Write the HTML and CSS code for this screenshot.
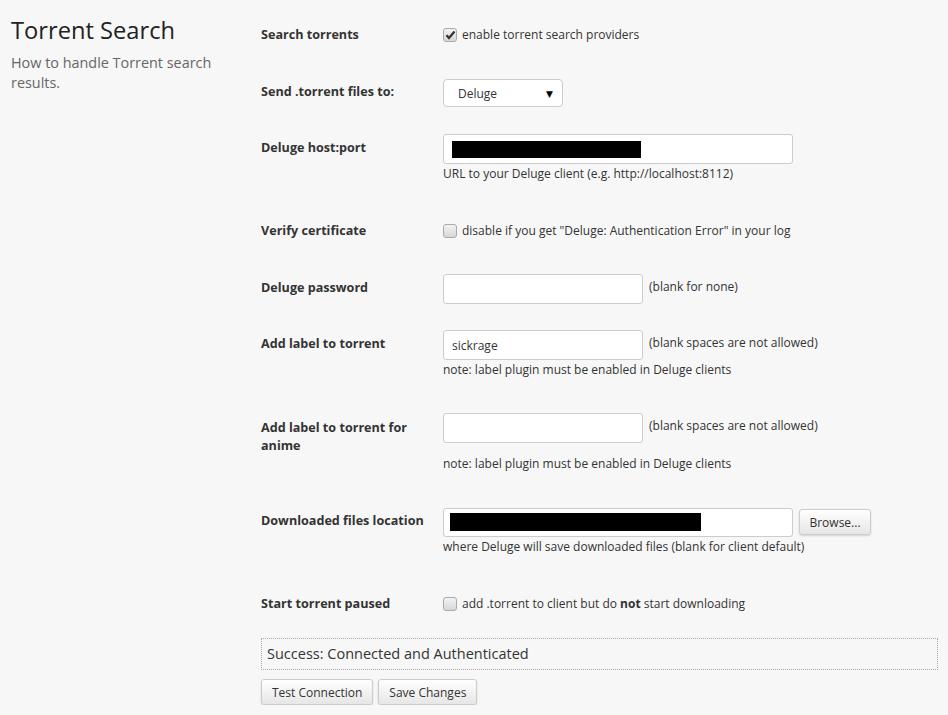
FILE: index.html
```html
<!DOCTYPE html>
<html>
<head>
<meta charset="utf-8">
<link rel="stylesheet" href="styles.css">
</head>
<body>
<div class="page">
  <div class="side">
    <h3 class="title">Torrent Search</h3>
    <p class="desc">How to handle Torrent search results.</p>
  </div>
  <div class="main">
    <div class="pair">
      <div class="lbl">Search torrents</div>
      <div class="ctl check"><span class="cb checked"><svg width="11" height="10" viewBox="0 0 11 10"><path d="M1.5 5.2 L4 8 L9.5 1.5" fill="none" stroke="#333" stroke-width="2.2"/></svg></span><span class="txt">enable torrent search providers</span></div>
    </div>
    <div class="pair">
      <div class="lbl">Send .torrent files to:</div>
      <div class="ctl"><div class="select"><span>Deluge</span><span class="arrow">▼</span></div></div>
    </div>
    <div class="pair">
      <div class="lbl">Deluge host:port</div>
      <div class="ctl"><div class="input wide"><span class="redact r1"></span></div></div>
      <div class="help">URL to your Deluge client (e.g. http://localhost:8112)</div>
    </div>
    <div class="pair">
      <div class="lbl">Verify certificate</div>
      <div class="ctl check"><span class="cb"></span><span class="txt">disable if you get "Deluge: Authentication Error" in your log</span></div>
    </div>
    <div class="pair">
      <div class="lbl">Deluge password</div>
      <div class="ctl"><div class="input short"></div><span class="side-note">(blank for none)</span></div>
    </div>
    <div class="pair">
      <div class="lbl">Add label to torrent</div>
      <div class="ctl"><div class="input short"><span class="val">sickrage</span></div><span class="side-note">(blank spaces are not allowed)</span></div>
      <div class="help">note: label plugin must be enabled in Deluge clients</div>
    </div>
    <div class="pair">
      <div class="lbl two">Add label to torrent for anime</div>
      <div class="ctl"><div class="input short"></div><span class="side-note">(blank spaces are not allowed)</span></div>
      <div class="help">note: label plugin must be enabled in Deluge clients</div>
    </div>
    <div class="pair">
      <div class="lbl">Downloaded files location</div>
      <div class="ctl"><div class="input wide loc"><span class="redact r2"></span></div><button class="btn browse">Browse...</button></div>
      <div class="help">where Deluge will save downloaded files (blank for client default)</div>
    </div>
    <div class="pair">
      <div class="lbl">Start torrent paused</div>
      <div class="ctl check"><span class="cb"></span><span class="txt">add .torrent to client but do <b>not</b> start downloading</span></div>
    </div>
    <div class="result">Success: Connected and Authenticated</div>
    <div class="actions">
      <button class="btn">Test Connection</button>
      <button class="btn">Save Changes</button>
    </div>
  </div>
</div>
</body>
</html>
```

FILE: styles.css
```css
html, body {
  margin: 0;
  padding: 0;
  background: #f7f7f7;
}
body {
  font-family: "Open Sans", "DejaVu Sans", sans-serif;
  font-size: 12px;
  color: #333;
}
.page {
  display: flex;
  padding: 0 10px 0 11px;
}
.side {
  width: 250px;
  flex: none;
}
.title {
  font-size: 23.7px;
  font-weight: 400;
  color: #222;
  margin: 13px 0 0 0;
  line-height: 34px;
}
.desc {
  margin: 6px 0 0 0;
  width: 220px;
  font-size: 14.4px;
  line-height: 20px;
  color: #666;
}
.main {
  flex: 1;
  padding-top: 21px;
}
.pair {
  display: grid;
  grid-template-columns: 182px 1fr;
  margin-bottom: 26px;
}
.lbl {
  font-weight: 700;
  font-size: 12.6px;
  line-height: 18px;
  padding-top: 5px;
  color: #333;
}
.lbl.two {
  padding-right: 20px;
  padding-top: 6px;
  line-height: 17.5px;
}
.ctl {
  display: flex;
  align-items: center;
  height: 30px;
}
.ctl.check {
  height: 31px;
  align-items: flex-start;
  padding-top: 5px;
  box-sizing: border-box;
}
.help {
  grid-column: 2;
  line-height: 19px;
  margin-bottom: 8px;
}
.cb {
  width: 12px;
  height: 12px;
  border: 1px solid #aaa;
  border-radius: 3px;
  background: linear-gradient(#f2f2f2, #d8d8d8);
  display: inline-flex;
  align-items: center;
  justify-content: center;
  margin: 2px 5px 0 0;
  box-sizing: content-box;
}
.txt {
  line-height: 18px;
}
.select {
  width: 120px;
  height: 28px;
  box-sizing: border-box;
  border: 1px solid #ccc;
  border-radius: 4px;
  background: #fff;
  display: flex;
  align-items: center;
  justify-content: space-between;
  padding: 0 9px 0 14px;
}
.arrow {
  font-size: 9px;
  color: #000;
}
.input {
  height: 30px;
  box-sizing: border-box;
  border: 1px solid #ccc;
  border-radius: 3px;
  background: #fff;
  display: flex;
  align-items: center;
  padding-left: 8px;
}
.input.wide { width: 350px; }
.input.short { width: 200px; }
.input.loc { height: 29px; padding-left: 6px; }
.val { color: #333; }
.redact {
  display: block;
  background: #000;
}
.r1 { width: 189px; height: 17px; }
.r2 { width: 251px; height: 18px; }
.side-note {
  margin-left: 6px;
  align-self: flex-start;
  line-height: 26px;
}
.btn {
  font-family: "Open Sans", "DejaVu Sans", sans-serif;
  font-size: 12px;
  color: #333;
  height: 26px;
  padding: 0 10px;
  border: 1px solid #ccc;
  border-radius: 3px;
  background: linear-gradient(#ffffff, #e6e6e6);
  box-shadow: 0 1px 2px rgba(0,0,0,0.15);
}
.browse {
  margin-left: 6px;
  width: 72px;
  padding: 0;
}
.result {
  margin-top: -9px;
  border: 1px dotted #aaa;
  height: 32px;
  box-sizing: border-box;
  padding: 0 5px;
  font-size: 14.5px;
  line-height: 30px;
  color: #333;
}
.actions {
  display: flex;
  gap: 5px;
  margin-top: 9px;
}
```
